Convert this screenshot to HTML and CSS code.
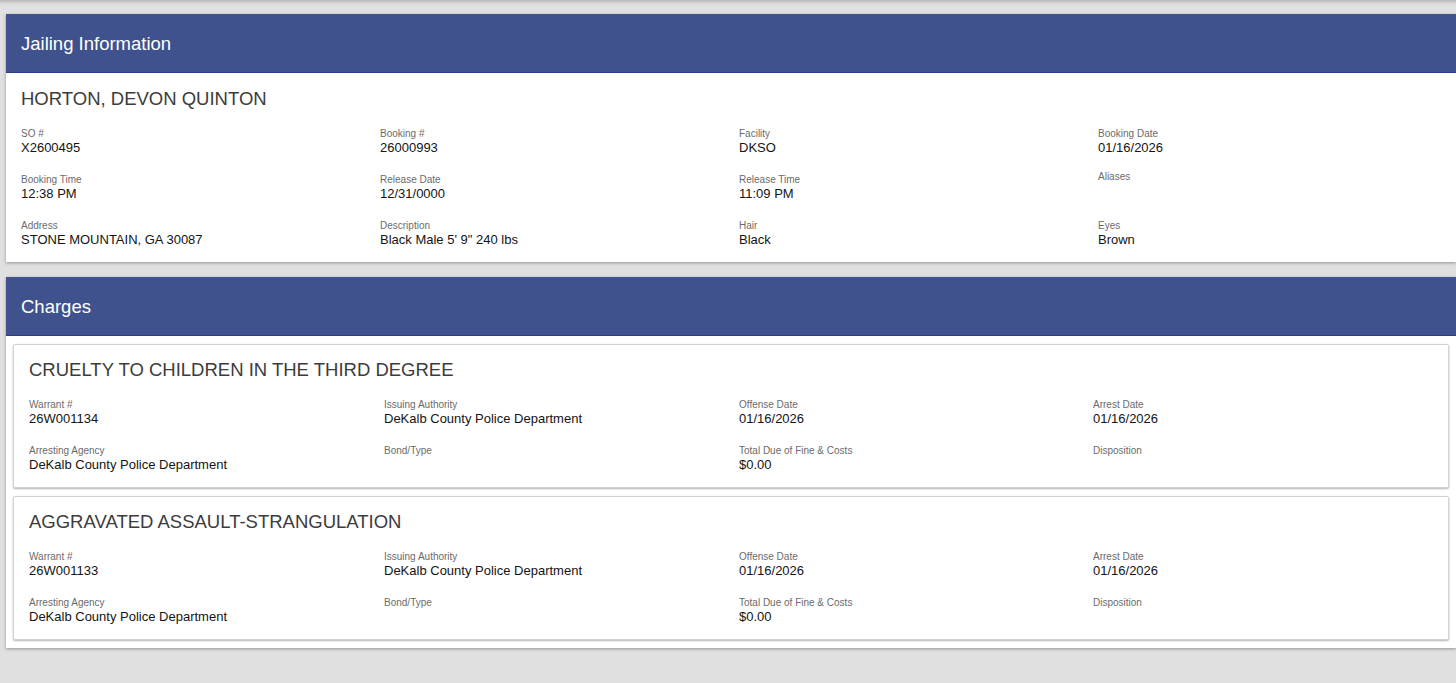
FILE: index.html
```
<!DOCTYPE html>
<html lang="en">
<head>
<meta charset="utf-8">
<title>Jailing Information</title>
<link rel="stylesheet" href="styles.css">
</head>
<body>
<div class="page">
  <section class="card">
    <div class="card-header">Jailing Information</div>
    <div class="card-body">
      <h2 class="title">HORTON, DEVON QUINTON</h2>
      <div class="grid grid--main">
        <div class="field"><div class="label">SO #</div><div class="value">X2600495</div></div>
        <div class="field"><div class="label">Booking #</div><div class="value">26000993</div></div>
        <div class="field"><div class="label">Facility</div><div class="value">DKSO</div></div>
        <div class="field"><div class="label">Booking Date</div><div class="value">01/16/2026</div></div>
        <div class="field"><div class="label">Booking Time</div><div class="value">12:38 PM</div></div>
        <div class="field"><div class="label">Release Date</div><div class="value">12/31/0000</div></div>
        <div class="field"><div class="label">Release Time</div><div class="value">11:09 PM</div></div>
        <div class="field field--raised"><div class="label">Aliases</div></div>
        <div class="field"><div class="label">Address</div><div class="value">STONE MOUNTAIN, GA 30087</div></div>
        <div class="field"><div class="label">Description</div><div class="value">Black Male 5' 9" 240 lbs</div></div>
        <div class="field"><div class="label">Hair</div><div class="value">Black</div></div>
        <div class="field"><div class="label">Eyes</div><div class="value">Brown</div></div>
      </div>
    </div>
  </section>

  <section class="card card--charges">
    <div class="card-header">Charges</div>
    <div class="charges">
      <div class="charge">
        <h2 class="title">CRUELTY TO CHILDREN IN THE THIRD DEGREE</h2>
        <div class="grid grid--charge">
          <div class="field"><div class="label">Warrant #</div><div class="value">26W001134</div></div>
          <div class="field"><div class="label">Issuing Authority</div><div class="value">DeKalb County Police Department</div></div>
          <div class="field"><div class="label">Offense Date</div><div class="value">01/16/2026</div></div>
          <div class="field"><div class="label">Arrest Date</div><div class="value">01/16/2026</div></div>
          <div class="field"><div class="label">Arresting Agency</div><div class="value">DeKalb County Police Department</div></div>
          <div class="field"><div class="label">Bond/Type</div><div class="value"></div></div>
          <div class="field"><div class="label">Total Due of Fine &amp; Costs</div><div class="value">$0.00</div></div>
          <div class="field"><div class="label">Disposition</div><div class="value"></div></div>
        </div>
      </div>
      <div class="charge">
        <h2 class="title">AGGRAVATED ASSAULT-STRANGULATION</h2>
        <div class="grid grid--charge">
          <div class="field"><div class="label">Warrant #</div><div class="value">26W001133</div></div>
          <div class="field"><div class="label">Issuing Authority</div><div class="value">DeKalb County Police Department</div></div>
          <div class="field"><div class="label">Offense Date</div><div class="value">01/16/2026</div></div>
          <div class="field"><div class="label">Arrest Date</div><div class="value">01/16/2026</div></div>
          <div class="field"><div class="label">Arresting Agency</div><div class="value">DeKalb County Police Department</div></div>
          <div class="field"><div class="label">Bond/Type</div><div class="value"></div></div>
          <div class="field"><div class="label">Total Due of Fine &amp; Costs</div><div class="value">$0.00</div></div>
          <div class="field"><div class="label">Disposition</div><div class="value"></div></div>
        </div>
      </div>
    </div>
  </section>
</div>
</body>
</html>
```

FILE: styles.css
```
html, body {
  margin: 0;
  padding: 0;
}
body {
  background: linear-gradient(to bottom, #b8b8b8 0px, #d4d4d4 3px, #e0e0e0 5px, #e0e0e0 100%);
  background-color: #e0e0e0;
  font-family: "Liberation Sans", Arial, sans-serif;
  overflow-x: hidden;
  min-height: 683px;
}
.page {
  padding: 14px 0 20px 6px;
  display: flex;
  flex-direction: column;
  gap: 15px;
}
.card {
  background: #ffffff;
  box-shadow: 0 1px 3px rgba(0, 0, 0, 0.35);
}
.card-header {
  box-sizing: border-box;
  display: flex;
  align-items: center;
  padding-left: 15px;
  padding-top: 1px;
  background: #40528d;
  border-bottom: 1px solid #2a3d88;
  height: 59px;
  color: #ffffff;
  font-size: 18.5px;
  line-height: 22px;
}
.card-body {
  padding: 15px 0 15px 15px;
}
.title {
  margin: 0 0 18px 0;
  font-weight: normal;
  font-size: 18.5px;
  line-height: 22px;
  color: #3c3c3c;
}
.grid {
  display: grid;
  row-gap: 19px;
}
.grid--main {
  grid-template-columns: 359px 359px 359px minmax(0, 1fr);
}
.grid--charge {
  grid-template-columns: 355px 355px 354px minmax(0, 1fr);
}
.field {
  min-height: 27px;
}
.field--raised {
  margin-top: -3px;
}
.label {
  font-size: 10px;
  line-height: 12px;
  color: #6b6b6b;
}
.value {
  font-size: 13px;
  line-height: 15px;
  color: #141414;
  min-height: 15px;
}
.charges {
  padding: 8px 7px 8px 7px;
  display: flex;
  flex-direction: column;
  gap: 8px;
}
.charge {
  border: 1px solid #d2d2d2;
  border-radius: 2px;
  box-shadow: 0 1px 2px rgba(0, 0, 0, 0.3);
  padding: 14px 0 15px 15px;
  background: #ffffff;
}
```
